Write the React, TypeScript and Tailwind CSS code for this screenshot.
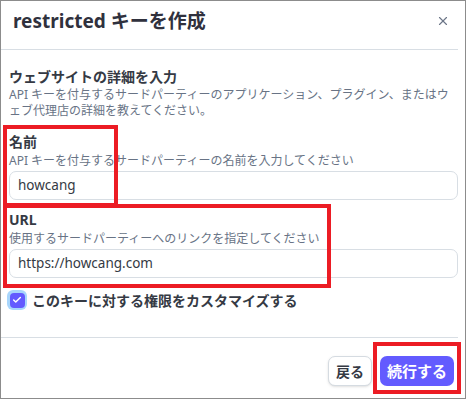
import { X, Check } from "lucide-react"

const font = { fontFamily: '"Noto Sans", "Noto Sans CJK JP", sans-serif' }

const Field = ({ label, hint, value }: { label: string; hint: string; value: string }) => {
  return (
    <div className="flex flex-col">
      <div className="h-[19px] flex items-center text-[14px] font-bold text-[#353a44]">{label}</div>
      <div className="h-[19px] flex items-center text-[12px] text-[#687385]">{hint}</div>
      <div className="mt-[1px] h-[29px] w-[449px] border border-[#d8dee4] rounded-[7px] flex items-center px-[8px] text-[13.5px] text-[#353a44]">
        {value}
      </div>
    </div>
  )
}

export default function App() {
  return (
    <div className="w-[468px] h-[400px] bg-white relative overflow-hidden" style={font}>
      <div className="w-[466px] h-[399px] border border-[#8c8c8c] flex flex-col">
        <div className="w-[457px] h-[49px] border-b border-[#d8dee4] flex items-start justify-between pl-[12px] pr-[8px] pt-[7px]">
          <h1 className="text-[19px] leading-[26px] font-bold text-[#30313d]">restricted キーを作成</h1>
          <X className="w-[14px] h-[14px] text-[#6c7688] mt-[6px]" strokeWidth={2} />
        </div>

        <div className="pl-[8px] pt-[15px] flex flex-col">
          <div className="h-[22px] flex items-center text-[14px] font-bold text-[#353a44]">ウェブサイトの詳細を入力</div>
          <p className="text-[12px] leading-[16px] text-[#687385]">
            API キーを付与するサードパーティーのアプリケーション、プラグイン、またはウ
            <br />
            ェブ代理店の詳細を教えてください。
          </p>

          <div className="mt-[13px]">
            <Field label="名前" hint="API キーを付与するサードパーティーの名前を入力してください" value="howcang" />
          </div>
          <div className="mt-[10px]">
            <Field label="URL" hint="使用するサードパーティーへのリンクを指定してください" value="https://howcang.com" />
          </div>

          <div className="mt-[12px] h-[20px] flex items-center gap-[5px]">
            <div className="w-[20px] h-[20px] rounded-[6px] bg-[#a8d6fc] flex items-center justify-center -ml-[2px]">
              <div className="w-[15px] h-[15px] rounded-[4px] bg-[#635bff] flex items-center justify-center">
                <Check className="w-[10px] h-[10px] text-white" strokeWidth={3.5} />
              </div>
            </div>
            <span className="text-[14px] font-bold text-[#353a44]">このキーに対する権限をカスタマイズする</span>
          </div>
        </div>

        <div className="mt-[27px] w-[457px] border-t border-[#d8dee4]" />

        <div className="w-[457px] flex justify-end gap-[8px] pt-[18px] pr-[4px]">
          <button className="h-[30px] px-[7px] rounded-[7px] border border-[#d5dbe1] bg-white text-[14px] font-bold text-[#353a44] shadow-sm">
            戻る
          </button>
          <button className="h-[30px] px-[7px] rounded-[7px] bg-[#635bff] text-[15px] font-bold text-white">
            続行する
          </button>
        </div>
      </div>

      <div className="absolute left-[3px] top-[125px] w-[115px] h-[82px] border-[4px] border-[#ec1c24]" />
      <div className="absolute left-[3px] top-[204px] w-[328px] h-[84px] border-[4px] border-[#ec1c24]" />
      <div className="absolute left-[373px] top-[342px] w-[88px] h-[52px] border-[4px] border-[#ec1c24]" />
    </div>
  )
}
